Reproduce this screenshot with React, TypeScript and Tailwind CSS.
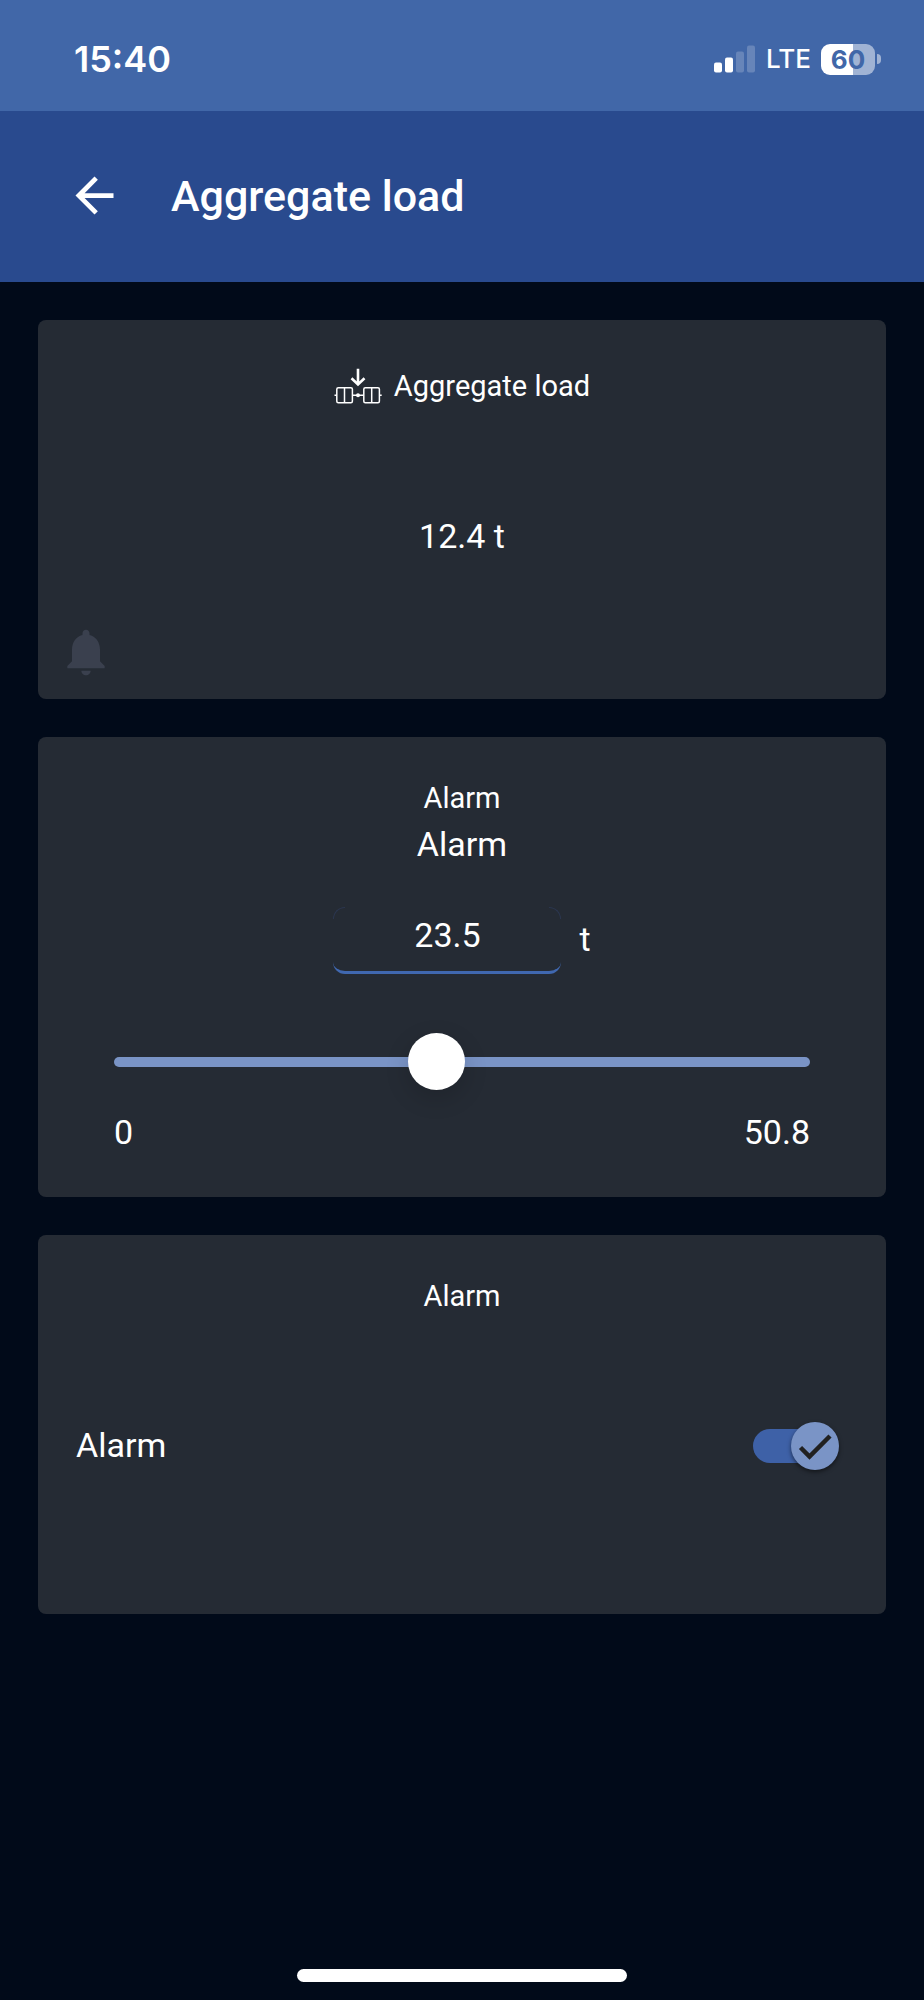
import { useState } from "react";
import type { ReactNode } from "react";

const MAX_LOAD = 50.8;

function SignalBars() {
  return (
    <svg width="42" height="28" viewBox="0 0 42 28" fill="#fff" aria-hidden="true">
      <rect x="0" y="17.5" width="8" height="10" rx="2" />
      <rect x="11" y="12.5" width="8" height="15" rx="2" />
      <rect x="22" y="6.5" width="8" height="21" rx="2" opacity="0.2" />
      <rect x="33" y="0.5" width="8" height="27" rx="2" opacity="0.2" />
    </svg>
  );
}

function AxleLoadIcon() {
  return (
    <svg width="48" height="36" viewBox="24 28 48 36" fill="none" stroke="#fff" aria-hidden="true">
      <path d="M48 28.7V44M41.5 38.3l6.5 6.2 6.5-6.2" strokeWidth="2.6" />
      <g strokeWidth="1.5">
        <rect x="26.8" y="47.8" width="15.6" height="15" rx="1.5" />
        <rect x="53.8" y="47.8" width="15.6" height="15" rx="1.5" />
        <path d="M34.5 47.8v15M61.7 47.8v15M24.5 55.3h2.3M42.4 55.3h11.4M69.4 55.3h2.3" />
      </g>
      <circle cx="48" cy="55.3" r="2" fill="#fff" stroke="none" />
    </svg>
  );
}

function BellIcon() {
  return (
    <svg width="56" height="56" viewBox="0 0 24 24" fill="#3a404e" aria-hidden="true">
      <path d="M12 22c1.1 0 2-.9 2-2h-4c0 1.1.89 2 2 2zm6-6v-5c0-3.07-1.64-5.64-4.5-6.32V4c0-.83-.67-1.5-1.5-1.5s-1.5.67-1.5 1.5v.68C7.63 5.36 6 7.92 6 11v5l-2 2v1h16v-1l-2-2z" />
    </svg>
  );
}

function Card({ title, icon, children }: { title: string; icon?: ReactNode; children: ReactNode }) {
  return (
    <section className="relative flex min-h-[379px] flex-col rounded-lg bg-[#252b34] px-[38px] pt-[39px] pb-[41px]">
      <h2
        className={
          icon
            ? "flex h-[54px] items-center justify-center gap-3 text-[29px] leading-[44px]"
            : "flex h-[44px] items-center justify-center text-[29px] leading-[44px]"
        }
      >
        {icon}
        {title}
      </h2>
      {children}
    </section>
  );
}

export default function App() {
  const [limit, setLimit] = useState("23.5");
  const [enabled, setEnabled] = useState(true);

  return (
    <div className="flex min-h-screen flex-col bg-[#010a19] font-['Roboto','Liberation_Sans',sans-serif] text-white">
      <div className="flex h-[111px] items-center justify-between bg-[#4167a8] pr-[43px] pb-[7px] pl-[74px] font-['Inter','Liberation_Sans',sans-serif]">
        <span className="pt-[14px] text-[36px] leading-[44px] font-semibold">15:40</span>
        <div className="flex items-center pt-[14px]">
          <SignalBars />
          <span className="ml-[10px] text-[26px] leading-[32px] font-medium">LTE</span>
          <span className="ml-[10px] flex h-[31px] w-[54px] items-center justify-center rounded-[9px] bg-[linear-gradient(90deg,#fff_60%,#a0b3d4_60%)] text-[26px] leading-[31px] font-bold text-[#4167a8]">
            60
          </span>
          <span className="ml-[2px] h-[10px] w-[4px] rounded-r-full bg-[#a0b3d4]" />
        </div>
      </div>

      <header className="flex h-[171px] items-center gap-[48px] bg-[#294a8e] px-[66px] pb-[2px]">
        <button type="button" aria-label="Back">
          <svg width="57" height="57" viewBox="0 0 24 24" fill="#fff" aria-hidden="true">
            <path d="M20 11H7.83l5.59-5.59L12 4l-8 8 8 8 1.41-1.41L7.83 13H20v-2z" />
          </svg>
        </button>
        <h1 className="text-[43px] leading-[56px] font-medium">Aggregate load</h1>
      </header>

      <main className="flex flex-1 flex-col gap-[38px] p-[38px]">
        <Card title="Aggregate load" icon={<AxleLoadIcon />}>
          <p className="flex flex-1 items-center justify-center text-[34px] leading-[48px]">12.4 t</p>
          <div className="absolute bottom-[19px] left-5">
            <BellIcon />
          </div>
        </Card>

        <Card title="Alarm">
          <label htmlFor="limit" className="text-center text-[34px] leading-[48px]">
            Alarm
          </label>
          <div className="mt-[39px] flex items-center justify-center gap-[18px] text-[34px]">
            <div className="relative">
              <input
                id="limit"
                type="text"
                inputMode="decimal"
                value={limit}
                onChange={(e) => setLimit(e.target.value)}
                className="block h-[67px] w-[228px] rounded-xl border-b-[3px] border-[#4068b0] bg-transparent pb-2 text-center leading-[48px] outline-none"
              />
              <span className="pointer-events-none absolute top-0 left-0 h-3 w-3 rounded-tl-xl border-t border-l border-[#2b364f]" />
              <span className="pointer-events-none absolute top-0 right-0 h-3 w-3 rounded-tr-xl border-t border-r border-[#2b364f]" />
            </div>
            <span className="pb-1 leading-[48px]">t</span>
          </div>
          <div className="mt-[59px] grid items-center px-[38px]">
            <div className="col-start-1 row-start-1 h-[10px] rounded-full bg-[#7a94c6]" />
            <input
              type="range"
              aria-label="Alarm limit"
              min={0}
              max={MAX_LOAD}
              step={0.1}
              value={Number(limit) || 0}
              onChange={(e) => setLimit(e.target.value)}
              className="col-start-1 row-start-1 -ml-7 h-[57px] w-[calc(100%+56px)] cursor-pointer appearance-none bg-transparent outline-none [&::-webkit-slider-thumb]:h-[57px] [&::-webkit-slider-thumb]:w-[57px] [&::-webkit-slider-thumb]:appearance-none [&::-webkit-slider-thumb]:rounded-full [&::-webkit-slider-thumb]:bg-white [&::-webkit-slider-thumb]:shadow-[0_8px_24px_rgba(0,0,0,0.16)]"
            />
          </div>
          <div className="mt-[18px] flex justify-between px-[38px] text-[34px] leading-[48px]">
            <span>0</span>
            <span>{MAX_LOAD}</span>
          </div>
        </Card>

        <Card title="Alarm">
          <div className="flex flex-1 items-center justify-between pr-[9px]">
            <label htmlFor="alarm-switch" className="pb-[2px] text-[34px] leading-[48px]">
              Alarm
            </label>
            <div className="relative flex h-12 w-[86px] items-center">
              <input
                id="alarm-switch"
                type="checkbox"
                role="switch"
                checked={enabled}
                onChange={(e) => setEnabled(e.target.checked)}
                className="h-[34px] w-[76px] cursor-pointer appearance-none rounded-full bg-[#4b5563] checked:bg-[#3e61a7]"
              />
              <span
                className={
                  enabled
                    ? "pointer-events-none absolute top-0 right-0 flex h-12 w-12 items-center justify-center rounded-full bg-[#7a94c6] shadow-[0_2px_4px_rgba(0,0,0,0.5)]"
                    : "pointer-events-none absolute top-0 left-0 flex h-12 w-12 items-center justify-center rounded-full bg-[#9ca3af] shadow-[0_2px_4px_rgba(0,0,0,0.5)]"
                }
              >
                {enabled && (
                  <svg width="48" height="48" viewBox="0 0 48 48" fill="none" stroke="#212121" strokeWidth="4.5" aria-hidden="true">
                    <path d="M9.5 25.5l9 9L39 14" />
                  </svg>
                )}
              </span>
            </div>
          </div>
        </Card>
      </main>

      <div className="flex justify-center pb-[18px]">
        <div className="h-[13px] w-[330px] rounded-full bg-white" />
      </div>
    </div>
  );
}
